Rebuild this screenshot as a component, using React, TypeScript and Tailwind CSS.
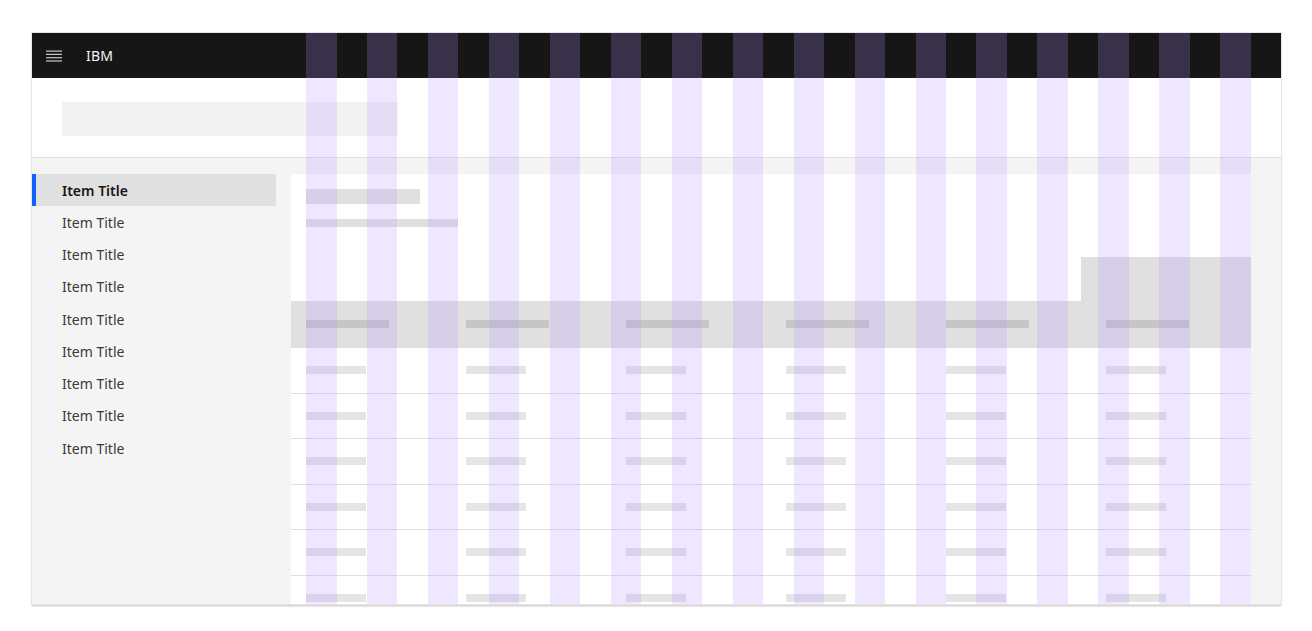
import React from 'react'

// 16 column overlay across the content area
const gridColumns = Array.from({ length: 16 }, (_, i) => i)
const navItems = Array.from({ length: 9 }, (_, i) => i)
const tableColumns = Array.from({ length: 6 }, (_, i) => i)
const tableRows = Array.from({ length: 6 }, (_, i) => i)

const MenuIcon: React.FC = () => (
  <svg width="16" height="12" viewBox="0 0 16 12" className="block">
    <rect x="0" y="0.5" width="16" height="1.2" fill="#c6c6c6" />
    <rect x="0" y="3.8" width="16" height="1.2" fill="#c6c6c6" />
    <rect x="0" y="7.1" width="16" height="1.2" fill="#c6c6c6" />
    <rect x="0" y="10.4" width="16" height="1.2" fill="#c6c6c6" />
  </svg>
)

const Sidebar: React.FC = () => (
  <nav className="w-[244px] shrink-0 pt-4 flex flex-col">
    {navItems.map((i) => (
      <div
        key={i}
        className={
          i === 0
            ? 'h-[32.25px] flex items-center bg-[#e0e0e0] border-l-4 border-[#0f62fe] pl-[26px] text-[14px] font-semibold text-[#161616]'
            : 'h-[32.25px] flex items-center pl-[30px] text-[14px] text-[#393939]'
        }
      >
        Item Title
      </div>
    ))}
  </nav>
)

const DataTable: React.FC = () => (
  <div className="flex flex-col">
    <div className="h-[47px] bg-[#e0e0e0] flex">
      {tableColumns.map((c) => (
        <div key={c} className="w-[160px] pl-[15px] pt-[19px]">
          <div className="w-[83px] h-2 bg-[#c6c6c6]" />
        </div>
      ))}
    </div>
    {tableRows.map((r) => (
      <div key={r} className="h-[45.5px] border-b border-[#e0e0e0] flex shrink-0">
        {tableColumns.map((c) => (
          <div key={c} className="w-[160px] pl-[15px] pt-[18px]">
            <div className="w-[60px] h-2 bg-[#e5e5e5]" />
          </div>
        ))}
      </div>
    ))}
  </div>
)

export default function App() {
  return (
    <div className="w-[1312px] h-[631px] bg-white pt-[33px] pl-[32px]" style={{ fontFamily: '"Noto Sans", "Open Sans", sans-serif' }}>
      <div className="relative w-[1249px] h-[571px] flex flex-col shadow-[0_0_0_1px_#e6e6e6,0_2px_2px_rgba(0,0,0,0.25)] overflow-hidden">
        <header className="h-[45px] shrink-0 bg-[#161616] flex items-center">
          <div className="w-[54px] flex justify-end pr-[24px]">
            <MenuIcon />
          </div>
          <span className="text-[14px] text-[#f4f4f4] tracking-[0.2px]">IBM</span>
        </header>

        <div className="h-[80px] shrink-0 bg-white border-b border-[#e0e0e0] pl-[30px] pt-[24px]">
          <div className="w-[336px] h-[34px] bg-[#f3f3f3]" />
        </div>

        <div className="flex-1 bg-[#f4f4f4] flex min-h-0">
          <Sidebar />
          <main className="ml-[15px] w-[960px] bg-white mt-4 overflow-hidden">
            <div className="pl-[15px] pt-[15px]">
              <div className="w-[114px] h-[15px] bg-[#e0e0e0]" />
              <div className="w-[152px] h-2 bg-[#e0e0e0] mt-[15px]" />
            </div>
            <div className="flex justify-end mt-[30px]">
              <div className="w-[170px] h-[44px] bg-[#e0e0e0]" />
            </div>
            <DataTable />
          </main>
        </div>

        {/* column grid overlay */}
        <div className="absolute top-0 bottom-0 left-[274px] w-[945px] flex justify-between pointer-events-none">
          {gridColumns.map((i) => (
            <div key={i} className="w-[30.5px] h-full bg-[rgba(182,141,255,0.22)]" />
          ))}
        </div>
      </div>
    </div>
  )
}
